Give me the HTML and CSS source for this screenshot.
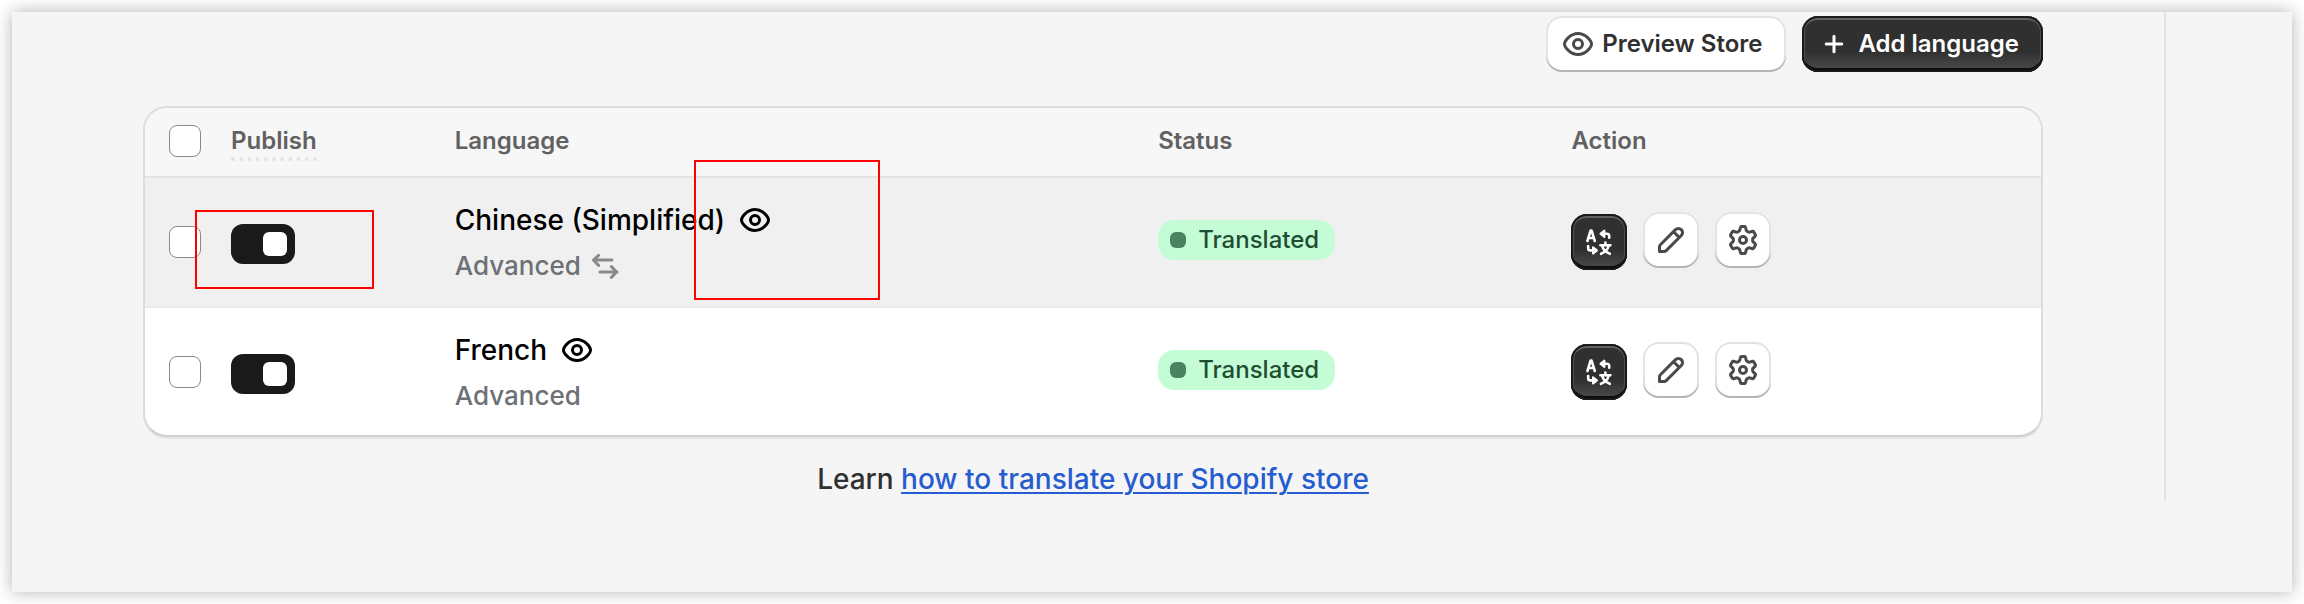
FILE: index.html
```html
<!DOCTYPE html>
<html lang="en">
<head>
<meta charset="utf-8">
<title>Languages</title>
<link rel="stylesheet" href="styles.css">
</head>
<body>
<svg class="sprite" aria-hidden="true">
  <symbol id="eye" viewBox="0 0 20 20"><path d="M10 4.75c-3.9 0-6.75 3.75-6.75 5.25S6.1 15.25 10 15.25 16.75 11.5 16.75 10 13.9 4.75 10 4.75Z"/><circle cx="10" cy="10" r="2.25"/></symbol>
  <symbol id="plus" viewBox="0 0 20 20"><path d="M10 6.1v7.8M6.1 10h7.8"/></symbol>
  <symbol id="swap" viewBox="0 0 20 20"><path d="M13.5 7H4.5M6.8 4.7 4.2 7l2.6 2.7M7.5 13h8.5M13.200 10.300 15.800 13l-2.600 2.700"/></symbol>
  <symbol id="pencil" viewBox="0 0 20 20"><path d="M4.25 15.750v-2.300c0-.4.160-.780.440-1.060l7.550-7.550a2.060 2.060 0 0 1 2.920 2.920l-7.550 7.550c-.280.280-.660.440-1.060.440ZM11.300 5.900l2.800 2.800"/></symbol>
  <symbol id="gear" viewBox="0 0 20 20"><path d="M9.200 3.250h1.600q.4 0 .5.500l.3 1.300q.1.400.5.600l.500.300q.4.200.8.100l1.300-.4q.5-.1.700.3l.8 1.400q.2.400-.1.700l-1 1q-.3.300-.3.650v.6q0 .35.300.65l1 1q.3.300.1.700l-.8 1.400q-.2.400-.7.300l-1.300-.4q-.4-.1-.8.100l-.5.300q-.4.200-.5.600l-.3 1.300q-.1.500-.5.500h-1.600q-.4 0-.5-.5l-.3-1.300q-.1-.4-.5-.6l-.5-.3q-.4-.2-.8-.1l-1.300.4q-.5.100-.7-.3l-.8-1.400q-.2-.4.100-.7l1-1q.3-.3.300-.65v-.6q0-.35-.3-.65l-1-1q-.3-.3-.1-.7l.8-1.400q.2-.4.700-.3l1.300.4q.4.100.8-.1l.5-.3q.4-.2.500-.6l.3-1.300q.1-.5.500-.5Z"/><circle cx="10" cy="10" r="1.750"/></symbol>
  <symbol id="translate" viewBox="0 0 20 20">
    <path d="M4.200 9.500 5.800 4.300h.5L7.900 9.500M4.900 8h2.300M15.100 7.900V7q0-1.100-1.100-1.100h-1.500M4.600 12v1.100q0 1.100 1.100 1.100h1.500M10.700 11.600h5M13.200 10.300v1.300M14.800 11.900q-.6 2.800-3.800 4M11.600 11.900q.6 2.800 3.800 4"/>
    <path class="solid" d="M12.700 4.300v3.200l-2-1.600ZM7 12.600v3.200l2-1.600Z"/>
  </symbol>
</svg>
<div class="panel">
  <main class="content">
    <header class="toolbar">
      <button class="button" type="button"><svg class="icon"><use href="#eye"/></svg>Preview Store</button>
      <button class="button button-primary" type="button"><svg class="icon"><use href="#plus"/></svg>Add language</button>
    </header>
    <section class="card">
      <table class="languages">
        <thead>
          <tr>
            <th class="col-check"><input class="checkbox" type="checkbox" aria-label="Select all languages"></th>
            <th class="col-publish"><span class="hint">Publish</span></th>
            <th class="col-language">Language</th>
            <th class="col-status">Status</th>
            <th class="col-action">Action</th>
          </tr>
        </thead>
        <tbody>
          <tr class="active">
            <td><input class="checkbox" type="checkbox" aria-label="Select Chinese (Simplified)"></td>
            <td><input class="toggle" type="checkbox" role="switch" checked aria-label="Publish Chinese (Simplified)"></td>
            <td>
              <div class="name">Chinese (Simplified)<button class="plain" type="button" aria-label="View Chinese (Simplified)"><svg class="icon"><use href="#eye"/></svg></button></div>
              <div class="mode">Advanced<svg class="icon icon-swap"><use href="#swap"/></svg></div>
            </td>
            <td><span class="badge">Translated</span></td>
            <td>
              <div class="actions">
                <button class="button button-primary button-icon" type="button" aria-label="Translate"><svg class="icon icon-translate"><use href="#translate"/></svg></button>
                <div class="actions-secondary">
                  <button class="button button-icon" type="button" aria-label="Edit"><svg class="icon"><use href="#pencil"/></svg></button>
                  <button class="button button-icon" type="button" aria-label="Settings"><svg class="icon"><use href="#gear"/></svg></button>
                </div>
              </div>
            </td>
          </tr>
          <tr>
            <td><input class="checkbox" type="checkbox" aria-label="Select French"></td>
            <td><input class="toggle" type="checkbox" role="switch" checked aria-label="Publish French"></td>
            <td>
              <div class="name">French<button class="plain" type="button" aria-label="View French"><svg class="icon"><use href="#eye"/></svg></button></div>
              <div class="mode">Advanced</div>
            </td>
            <td><span class="badge">Translated</span></td>
            <td>
              <div class="actions">
                <button class="button button-primary button-icon" type="button" aria-label="Translate"><svg class="icon icon-translate"><use href="#translate"/></svg></button>
                <div class="actions-secondary">
                  <button class="button button-icon" type="button" aria-label="Edit"><svg class="icon"><use href="#pencil"/></svg></button>
                  <button class="button button-icon" type="button" aria-label="Settings"><svg class="icon"><use href="#gear"/></svg></button>
                </div>
              </div>
            </td>
          </tr>
        </tbody>
      </table>
    </section>
    <p class="help">Learn <a href="#">how to translate your Shopify store</a></p>
  </main>
  <div class="mark mark-toggle"></div>
  <div class="mark mark-view"></div>
</div>
</body>
</html>
```
FILE: styles.css
```css
* { box-sizing: border-box; }
body {
  margin: 0;
  padding: 12px;
  background: #fff;
  color: #303030;
  font-family: Inter, "Liberation Sans", sans-serif;
  font-size: 24px;
  font-weight: 450;
}
.sprite { position: absolute; width: 0; height: 0; }
.panel {
  position: relative;
  padding: 0 126px 91px 0;
  background: #f5f5f5;
  box-shadow: 0 0 16px rgba(0, 0, 0, .3);
}
.content {
  padding: 4px 121px 0 131px;
  border-right: 2px solid #e3e3e3;
}
.toolbar {
  display: flex;
  justify-content: flex-end;
  gap: 16px;
  margin-bottom: 34px;
}
.icon {
  flex: none;
  width: 40px;
  height: 40px;
  fill: none;
  stroke: currentColor;
  stroke-width: 1.5;
  stroke-linecap: round;
  stroke-linejoin: round;
}
.icon-translate { stroke-width: 1.3; }
.solid { fill: currentColor; stroke-width: 1; }
.button {
  display: flex;
  align-items: center;
  justify-content: center;
  gap: 4px;
  height: 56px;
  padding: 0 24px 0 12px;
  border: 0;
  border-radius: 16px;
  background: #fff;
  box-shadow: inset 0 -2px 0 #b5b5b5, inset 0 0 0 2px #e3e3e3;
  color: #303030;
  font: 600 24px/32px Inter, "Liberation Sans", sans-serif;
}
.button .icon { color: #4a4a4a; }
.button-primary {
  background: linear-gradient(#303030 63%, #4d4d4d);
  box-shadow: inset 0 0 0 2px #1a1a1a, inset 0 -4px 0 #0d0d0d, inset 0 4px 0 #616161, inset 0 0 0 3px #4f4f4f;
  color: #fff;
}
.button-primary .icon { color: #fff; }
.button-icon { width: 56px; padding: 0; }
.card {
  overflow: hidden;
  border: 2px solid #dcdcdc;
  border-bottom-color: #d0d0d0;
  border-radius: 24px;
  background: #fff;
  box-shadow: 0 2px 0 #e6e6e6;
}
.languages {
  width: 100%;
  table-layout: fixed;
  border-collapse: separate;
  border-spacing: 0;
}
th, td { padding: 0 12px; text-align: left; }
th {
  height: 70px;
  padding-bottom: 2px;
  border-bottom: 2px solid #e3e3e3;
  background: #f7f7f7;
  color: #616161;
  font-weight: 600;
  line-height: 32px;
}
td { height: 127px; }
.active td {
  height: 130px;
  border-bottom: 2px solid #ebebeb;
  background: #f0f0f0;
}
th:first-child, td:first-child { padding-left: 24px; }
.col-check { width: 74px; }
.col-publish { width: 11.8%; }
.col-language { width: 37.1%; }
.col-status { width: 21.8%; }
.hint {
  display: block;
  width: fit-content;
  margin-top: 4px;
  border-bottom: 4px dotted #e3e3e3;
}
.checkbox, .toggle { display: block; margin: 0; appearance: none; }
.checkbox {
  width: 32px;
  height: 32px;
  border: 1px solid #8a8a8a;
  border-radius: 8px;
  background: #fff;
}
.toggle {
  display: flex;
  align-items: center;
  justify-content: flex-end;
  width: 64px;
  height: 40px;
  margin-top: 4px;
  padding: 8px;
  border-radius: 12px;
  background: #1a1a1a;
}
.toggle::before {
  content: "";
  width: 24px;
  height: 24px;
  border-radius: 6px;
  background: #fff;
}
.name {
  display: flex;
  align-items: center;
  gap: 10px;
  color: #000;
  font-size: 28px;
  line-height: 48px;
}
.plain {
  display: flex;
  padding: 0;
  border: 0;
  background: none;
  color: #000;
}
.mode {
  display: flex;
  align-items: center;
  gap: 4px;
  color: #6d7175;
  font-size: 26px;
  line-height: 44px;
}
.icon-swap { color: #8a8a8a; }
.badge {
  display: flex;
  align-items: center;
  gap: 12px;
  width: fit-content;
  margin-bottom: 4px;
  padding: 4px 16px 4px 12px;
  border-radius: 16px;
  background: #c4fcd6;
  color: #1f4e33;
  line-height: 32px;
}
.badge::before {
  content: "";
  width: 16px;
  height: 16px;
  border-radius: 6px;
  background: #47845f;
}
.actions, .actions-secondary { display: flex; align-items: center; gap: 16px; }
.actions-secondary { padding-bottom: 4px; }
.help {
  margin: 0;
  padding: 22px 0 2px;
  font-size: 28px;
  line-height: 40px;
  text-align: center;
}
.help a { color: #255ccf; text-underline-offset: 3px; text-decoration-thickness: 2px; }
.mark { position: absolute; border: 2px solid #f00; pointer-events: none; }
.mark-toggle { left: 183px; top: 198px; width: 179px; height: 79px; }
.mark-view { left: 682px; top: 148px; width: 186px; height: 140px; }
```
